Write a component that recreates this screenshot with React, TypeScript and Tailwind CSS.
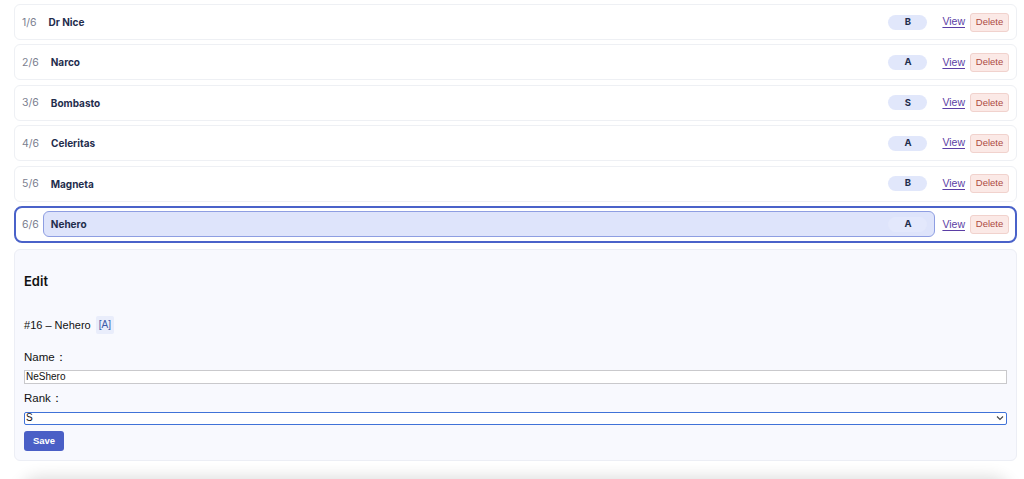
import React from 'react'

interface Hero {
  id: number
  name: string
  rank: string
}

const heroes: Hero[] = [
  { id: 11, name: 'Dr Nice', rank: 'B' },
  { id: 12, name: 'Narco', rank: 'A' },
  { id: 13, name: 'Bombasto', rank: 'S' },
  { id: 14, name: 'Celeritas', rank: 'A' },
  { id: 15, name: 'Magneta', rank: 'B' },
  { id: 16, name: 'Nehero', rank: 'A' },
]

const HeroRow: React.FC<{ hero: Hero; index: number; selected: boolean }> = ({ hero, index, selected }) => {
  return (
    <li
      className={
        selected
          ? 'flex items-center h-[37px] pl-[6px] pr-[6px] rounded-lg border-2 border-[#4a62c9] bg-white'
          : 'flex items-center h-[36px] pl-[7px] pr-[7px] rounded-md border border-[#eef0f4] bg-white'
      }
    >
      <span className="mr-[4px] text-[10.5px] leading-[12px] pt-[1px] text-[#7b8090]">{index + 1}/6</span>
      <div
        className={
          selected
            ? 'flex-1 flex items-center h-[26px] px-[7px] rounded-md border border-[#8e9ee2] bg-[#dee4fb]'
            : 'flex-1 flex items-center h-[26px] px-[7px] rounded-md border border-transparent'
        }
      >
        <span className="text-[10px] leading-[12px] font-bold text-[#1f2d4d]">{hero.name}</span>
        <span
          className={
            (selected ? 'bg-[#e3e8fc] ' : 'bg-[#e1e7fb] ') +
            'ml-auto w-[39px] h-[15px] rounded-full flex items-center justify-center text-[9.5px] font-bold text-[#1f2d4d]'
          }
        >
          {hero.rank}
        </span>
      </div>
      <a href="#" className="ml-[7px] text-[10.5px] text-[#5b3ea5] underline underline-offset-2 font-['Liberation_Sans',sans-serif]">
        View
      </a>
      <button className="ml-[5px] h-[19px] w-[39px] rounded-[3px] border border-[#f1d2cd] bg-[#fbe9e6] text-[9.5px] text-[#ad4a42] font-['Liberation_Sans',sans-serif]">
        Delete
      </button>
    </li>
  )
}

export default function App() {
  const selected = heroes[5]
  return (
    <div className="h-[479px] overflow-hidden bg-white font-['Inter',sans-serif] pt-[4px] pl-[14px] pr-[7px]">
      <ul className="flex flex-col gap-[4.4px]">
        {heroes.map((h, i) => (
          <HeroRow key={h.id} hero={h} index={i} selected={i === 5} />
        ))}
      </ul>

      <section className="mt-[6px] h-[212px] rounded-md border border-[#eceef5] bg-[#f8f9fe] px-[9px] pt-[22px] font-['Liberation_Sans',sans-serif] text-[#111]">
        <h2 className="text-[13px] font-semibold font-['Inter',sans-serif] leading-[18px]">Edit</h2>
        <div className="mt-[26px] flex items-center leading-[16px]">
          <span className="text-[11px]">#{selected.id} – {selected.name}</span>
          <span className="ml-[5px] px-[3px] py-[1px] rounded-[2px] bg-[#e9edfb] text-[#3c5aa8] text-[10px]">[{selected.rank}]</span>
        </div>
        <label className="block mt-[15px] text-[11.5px] leading-[16px]">Name：</label>
        <input
          className="block mt-[5px] w-full h-[14px] border border-[#c9c9cc] bg-white px-[1px] text-[10px] text-[#111] outline-none"
          defaultValue="NeShero"
        />
        <label className="block mt-[6px] text-[11.5px] leading-[16px]">Rank：</label>
        <div className="relative mt-[6px]">
          <select
            className="block w-full h-[13px] rounded-[2px] border-[1.5px] border-[#3f72d8] bg-white px-[1px] text-[10px] leading-[10px] text-[#111] appearance-none outline-none"
            defaultValue="S"
          >
            <option>S</option>
            <option>A</option>
            <option>B</option>
          </select>
          <svg className="absolute right-[3px] top-[3px] pointer-events-none" width="8" height="6" viewBox="0 0 8 6">
            <path d="M1 1.5 L4 4.5 L7 1.5" fill="none" stroke="#444" strokeWidth="1.1" />
          </svg>
        </div>
        <button className="mt-[6px] h-[20px] w-[40px] rounded-[3px] bg-[#4a5fc6] text-white text-[9.5px] font-bold">Save</button>
      </section>

      <div className="mt-[22px] mx-[6px] h-[40px] rounded-t-[20px] bg-[#e4e4e4] shadow-[0_-6px_16px_rgba(0,0,0,0.14)]" />
    </div>
  )
}
